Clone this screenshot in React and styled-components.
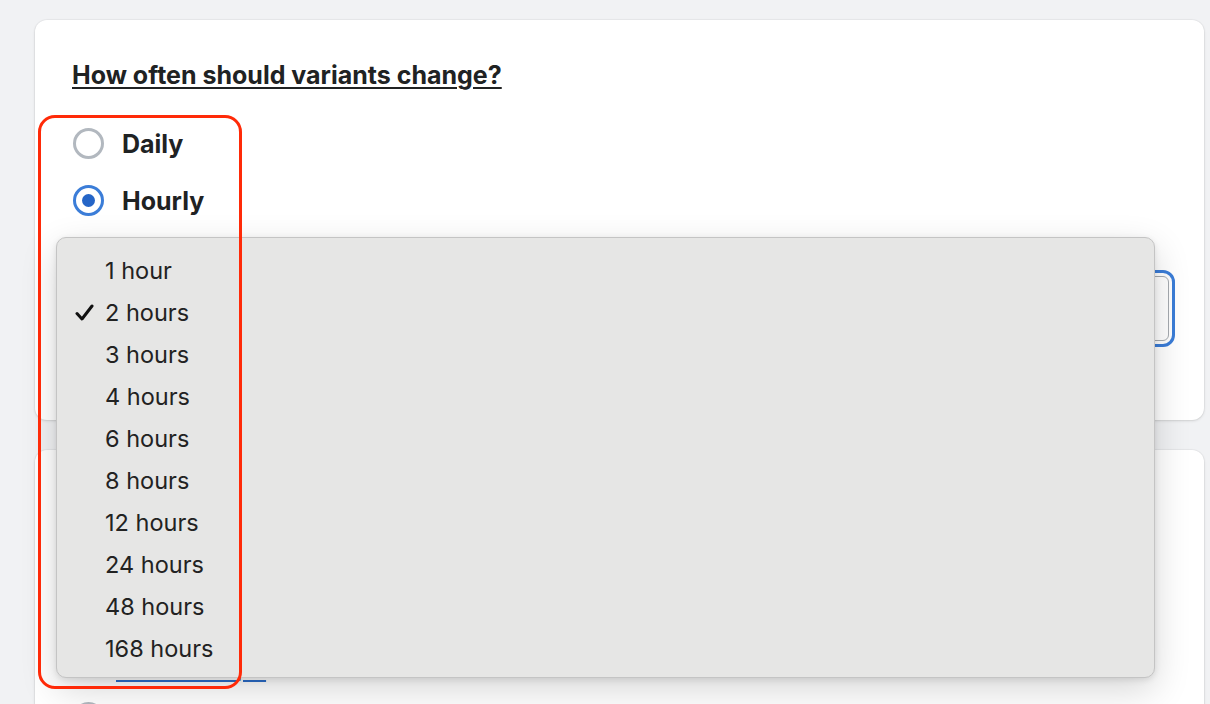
import React from "react";
import styled, { createGlobalStyle } from "styled-components";

const Global = createGlobalStyle`
  html, body { margin: 0; padding: 0; background: #f1f2f4; }
  body { font-family: Inter, "Noto Sans", sans-serif; color: #202223; -webkit-font-smoothing: antialiased; }
`;

const Page = styled.div`
  position: relative;
  width: 1210px;
  height: 704px;
  overflow: hidden;
  box-sizing: border-box;
  padding: 20px 6px 0 35px;
  display: flex;
  flex-direction: column;
  gap: 30px;
`;

const Card = styled.section`
  flex: none;
  height: ${(p) => p.$height}px;
  box-sizing: border-box;
  background: #ffffff;
  border-radius: 12px;
  box-shadow: 0 0 0 1px rgba(0, 0, 0, 0.03), 0 1px 3px rgba(0, 0, 0, 0.12);
  padding: ${(p) => p.$pad};
  display: flex;
  flex-direction: column;
`;

const Heading = styled.h2`
  margin: 0;
  font-size: 25px;
  line-height: 32px;
  font-weight: 700;
  text-decoration: underline;
  text-underline-offset: 3px;
  text-decoration-thickness: 2px;
  color: #202223;
`;

const RadioGroup = styled.div`
  display: flex;
  flex-direction: column;
  gap: 26px;
  margin-top: ${(p) => p.$top}px;
`;

const RadioRow = styled.label`
  display: flex;
  align-items: center;
  gap: 18px;
  height: 31px;
  padding-left: 1px;
`;

const RadioCircle = styled.span`
  box-sizing: border-box;
  width: 31px;
  height: 31px;
  border-radius: 50%;
  border: 3px solid ${(p) => (p.$checked ? "#3b7dd8" : "#b2b8bf")};
  display: flex;
  align-items: center;
  justify-content: center;
  &::after {
    content: "";
    width: 13px;
    height: 13px;
    border-radius: 50%;
    background: ${(p) => (p.$checked ? "#2565c7" : "transparent")};
  }
`;

const RadioLabel = styled.span`
  font-size: 25px;
  font-weight: 700;
  color: #202223;
`;

const SelectBox = styled.div`
  margin-top: 60px;
  height: 65px;
  flex: none;
  box-sizing: border-box;
  border: 1px solid #a6abb0;
  border-radius: 6px;
  outline: 3px solid #3b7dd8;
  outline-offset: 3px;
  display: flex;
  align-items: center;
  padding: 0 16px;
  font-size: 22px;
  color: #202223;
`;

const HelpText = styled.p`
  margin: ${(p) => p.$margin};
  padding-left: ${(p) => p.$indent || 0}px;
  font-size: 20px;
  line-height: 28px;
  color: #6d7175;
`;

const Link = styled.a`
  color: #2c6ecb;
  text-decoration: underline;
  text-decoration-thickness: 2px;
  text-underline-offset: 3px;
`;

const Menu = styled.ul`
  position: absolute;
  left: 56px;
  top: 237px;
  width: 1099px;
  height: 441px;
  box-sizing: border-box;
  margin: 0;
  padding: 11px 0 9px 0;
  list-style: none;
  background: #e6e6e5;
  border: 1px solid #c4c4c4;
  border-radius: 10px;
  box-shadow: 0 12px 36px rgba(0, 0, 0, 0.16), 0 2px 6px rgba(0, 0, 0, 0.1);
  z-index: 5;
`;

const MenuItem = styled.li`
  position: relative;
  height: 42px;
  display: flex;
  align-items: center;
  padding-left: 48px;
  font-family: Inter, "Noto Sans", sans-serif;
  font-size: 23.5px;
  color: #222222;
`;

const Check = styled.svg`
  position: absolute;
  left: 18px;
  top: 13px;
`;

const Annotation = styled.div`
  position: absolute;
  left: 38px;
  top: 115px;
  width: 204px;
  height: 574px;
  box-sizing: border-box;
  border: 3.5px solid #ff2a08;
  border-radius: 17px;
  z-index: 10;
  pointer-events: none;
`;

const options = [
  "1 hour",
  "2 hours",
  "3 hours",
  "4 hours",
  "6 hours",
  "8 hours",
  "12 hours",
  "24 hours",
  "48 hours",
  "168 hours",
];

export default function App() {
  return (
    <>
      <Global />
      <Page>
        <Card $height={400} $pad="39px 35px 0 37px">
          <Heading>How often should variants change?</Heading>
          <RadioGroup $top={37}>
            <RadioRow>
              <RadioCircle />
              <RadioLabel>Daily</RadioLabel>
            </RadioRow>
            <RadioRow>
              <RadioCircle $checked />
              <RadioLabel>Hourly</RadioLabel>
            </RadioRow>
          </RadioGroup>
          <SelectBox>2 hours</SelectBox>
        </Card>
        <Card $height={300} $pad="39px 35px 0 37px">
          <Heading>Which variant should be shown?</Heading>
          <RadioGroup $top={24}>
            <RadioRow>
              <RadioCircle $checked />
              <RadioLabel>Rotate in order</RadioLabel>
            </RadioRow>
          </RadioGroup>
          <HelpText $margin="8px 0 0 0" $indent={44}>
            Variants are shown one after another, starting with the first
            variant in the list.
          </HelpText>
          <HelpText $margin="8px 0 0 0" $indent={44}>
            After the last variant, the rotation starts again from the top.
          </HelpText>
          <HelpText $margin="8px 0 0 0" $indent={44}>
            <Link>See an example</Link>
          </HelpText>
          <RadioGroup $top={18}>
            <RadioRow>
              <RadioCircle />
              <RadioLabel>Random</RadioLabel>
            </RadioRow>
          </RadioGroup>
        </Card>
        <Menu>
          {options.map((o) => (
            <MenuItem key={o}>
              {o === "2 hours" && (
                <Check width="19" height="17" viewBox="0 0 19 17">
                  <path
                    d="M2 9.5 L7 15 L17 2"
                    fill="none"
                    stroke="#111"
                    strokeWidth="3"
                    strokeLinecap="round"
                    strokeLinejoin="round"
                  />
                </Check>
              )}
              {o}
            </MenuItem>
          ))}
        </Menu>
        <Annotation />
      </Page>
    </>
  );
}
